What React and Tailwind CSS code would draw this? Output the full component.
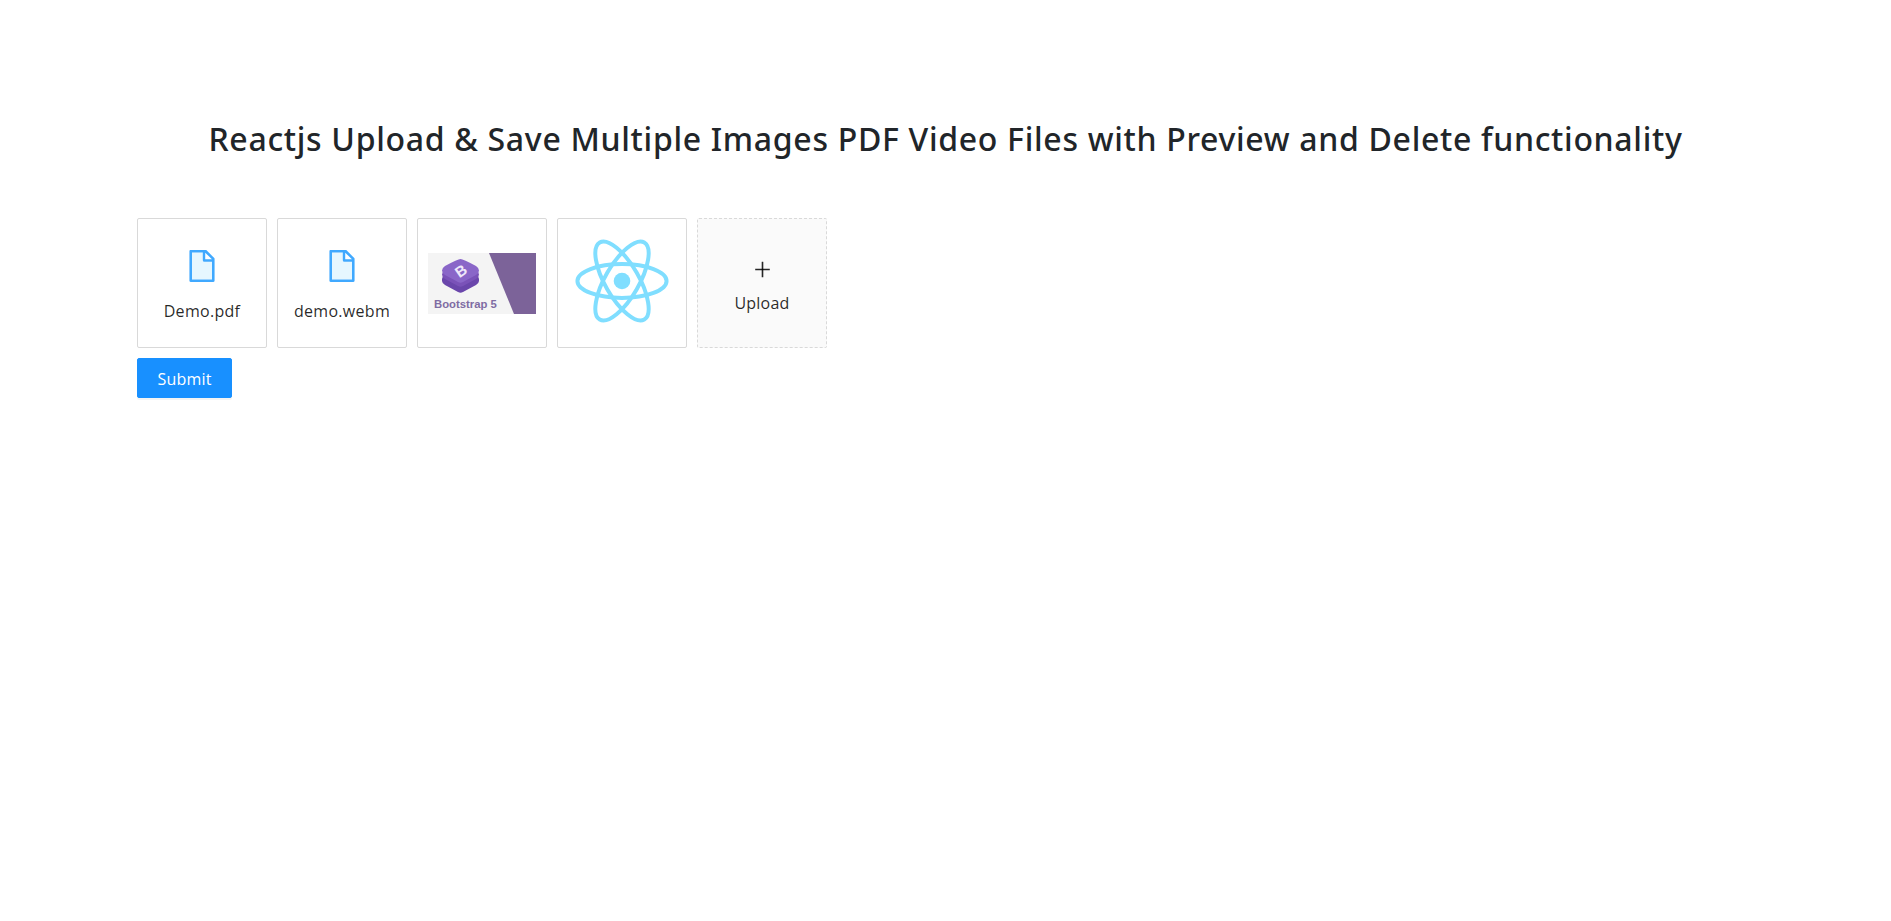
const FileIcon = () => (
  <svg viewBox="64 64 896 896" className="w-8 h-8 block">
    <path d="M534 352V136H232v752h560V394H576a42 42 0 01-42-42z" fill="#e6f7ff" />
    <path d="M854.6 288.6L639.4 73.4c-6-6-14.1-9.4-22.6-9.4H192c-17.7 0-32 14.3-32 32v832c0 17.7 14.3 32 32 32h640c17.7 0 32-14.3 32-32V311.3c0-8.5-3.4-16.7-9.4-22.7zM602 137.8L790.2 326H602V137.8zM792 888H232V136h302v216a42 42 0 0042 42h216v494z" fill="#40a9ff" />
  </svg>
);

const BootstrapThumb = () => (
  <svg viewBox="0 0 108 61" className="w-[108px] h-[61px] block">
    <rect width="108" height="61" fill="#f4f4f4" />
    <polygon points="61,0 108,0 108,61 86,61" fill="#7c6399" />
    <path d="M32.5 14 Q35 14 48 21 Q51 23 51 26 L51 28 Q51 30 48 32 L35 39 Q32.5 40.5 30 39 L17 32 Q14 30 14 28 L14 26 Q14 23 17 21 Q30 14 32.5 14 Z" fill="#6a46ab" />
    <path d="M32.5 10 Q35 10 48 17 Q51 19 51 21.5 Q51 24 48 26 L35 33 Q32.5 34.5 30 33 L17 26 Q14 24 14 21.5 Q14 19 17 17 Q30 10 32.5 10 Z" fill="#7a52b8" />
    <path d="M32.5 6 Q35 6 48 13 Q51 15 51 17.5 Q51 20 48 22 L35 29 Q32.5 30.5 30 29 L17 22 Q14 20 14 17.5 Q14 15 17 13 Q30 6 32.5 6 Z" fill="#8a66c8" />
    <text x="33" y="23" fontSize="15" fontWeight="700" fontFamily="'Liberation Sans', sans-serif" fill="#efe8fa" textAnchor="middle" transform="rotate(-35 33 18)">B</text>
    <text x="6" y="55.3" fontSize="11.3" fontWeight="700" fontFamily="'Liberation Sans', sans-serif" fill="#7f6ca3">Bootstrap 5</text>
  </svg>
);

const ReactLogo = () => (
  <svg viewBox="-11.5 -10.232 23 20.463" className="w-[108px] h-[96px] block mb-1" fill="none">
    <circle r="1.77" fill="#80deff" />
    <g stroke="#80deff" strokeWidth="0.85" fill="none">
      <ellipse rx="9.5" ry="3.6" />
      <ellipse rx="9.5" ry="3.6" transform="rotate(60)" />
      <ellipse rx="9.5" ry="3.6" transform="rotate(120)" />
    </g>
  </svg>
);

const cardClass = "w-[130px] h-[130px] border border-[#d9d9d9] rounded-[2px] p-[9px] flex flex-col items-center justify-center";

const FileCard = ({ name }) => (
  <div className="w-[130px] h-[130px] border border-[#d9d9d9] rounded-[2px] pt-[31px] flex flex-col items-center">
    <FileIcon />
    <span className="mt-[17px] text-[16px] leading-[24px] tracking-[0.3px] text-[#000000d9]">{name}</span>
  </div>
);

export default function App() {
  return (
    <div className="min-h-[921px] bg-white px-[137px] pt-[113px] font-['Open_Sans','Noto_Sans',sans-serif]">
      <h1 className="text-center font-['Noto_Sans','Open_Sans',sans-serif] text-[32px] leading-[52px] font-medium tracking-[0.69px] text-[#212529] whitespace-nowrap">
        Reactjs Upload &amp; Save Multiple Images PDF Video Files with Preview and Delete functionality
      </h1>
      <div className="mt-[53px] flex gap-[10px]">
        <FileCard name="Demo.pdf" />
        <FileCard name="demo.webm" />
        <div className={cardClass}><BootstrapThumb /></div>
        <div className={cardClass}><ReactLogo /></div>
        <div className="w-[130px] h-[130px] border border-dashed border-[#d9d9d9] rounded-[2px] bg-[#fafafa] pt-[8px] flex flex-col items-center justify-center">
          <svg viewBox="64 64 896 896" className="w-[19px] h-[19px] block" fill="#000000d9">
            <path d="M482 152h60q8 0 8 8v704q0 8-8 8h-60q-8 0-8-8V160q0-8 8-8z" />
            <path d="M176 474h672q8 0 8 8v60q0 8-8 8H176q-8 0-8-8v-60q0-8 8-8z" />
          </svg>
          <span className="mt-[12px] text-[16px] leading-[24px] tracking-[0.2px] text-[#000000d9]">Upload</span>
        </div>
      </div>
      <button className="mt-[10px] block w-[95px] h-[40px] pt-[2px] rounded-[2px] bg-[#1890ff] text-white text-[16px] tracking-[0.2px] border border-[#1890ff] shadow-[0_2px_0_rgba(0,0,0,0.045)]">
        Submit
      </button>
    </div>
  );
}
